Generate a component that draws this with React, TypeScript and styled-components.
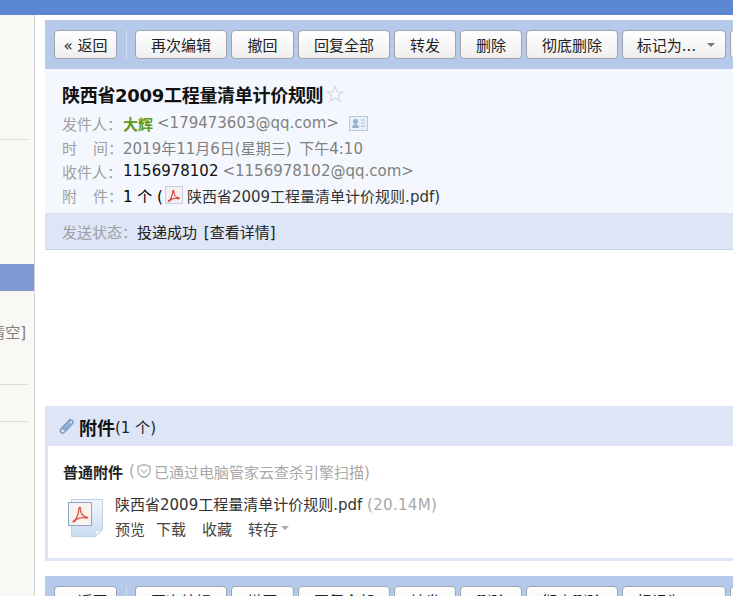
import React from 'react';
import styled, {createGlobalStyle} from 'styled-components';

const GlobalStyle = createGlobalStyle`
  html, body {
    margin: 0;
    padding: 0;
    background: #fff;
    overflow: hidden;
  }
  * {
    box-sizing: border-box;
  }
`;

const cjk = `"DejaVu Sans", "Noto Sans CJK SC", sans-serif`;

const Page = styled.div`
  width: 733px;
  height: 596px;
  overflow: hidden;
  display: flex;
  flex-direction: column;
  font-family: ${cjk};
  font-size: 15px;
  color: #000;
`;

const TopBar = styled.div`
  flex: none;
  height: 15px;
  background: #5b88d1;
`;

const Body = styled.div`
  flex: 1;
  min-height: 0;
  display: flex;
`;

const Sidebar = styled.aside`
  flex: none;
  width: 35px;
  background: #f9f8f5;
  border-right: 1px solid #d3d3d3;
  display: flex;
  flex-direction: column;
  overflow: hidden;
`;

const SideRule = styled.div<{$top: number}>`
  height: 1px;
  margin-top: ${p => p.$top}px;
  margin-right: 6px;
  background: #dddbd6;
`;

const SideActive = styled.div`
  height: 27px;
  margin-top: 124px;
  background: #7f9ad2;
`;

const SideText = styled.div`
  height: 20px;
  margin-top: 32px;
  padding-right: 8px;
  display: flex;
  justify-content: flex-end;
  white-space: nowrap;
  line-height: 20px;
  color: #808080;
`;

const Main = styled.main`
  flex: 1;
  min-width: 0;
  padding: 5px 0 0 10px;
  display: flex;
  flex-direction: column;
  overflow: hidden;
`;

const Toolbar = styled.div`
  flex: none;
  height: 49px;
  padding: 10px 0 0 9px;
  background: #b5c9ea;
  display: flex;
  align-items: flex-start;
  gap: 4px;
`;

const Button = styled.div<{$w: number}>`
  flex: none;
  width: ${p => p.$w}px;
  height: 29px;
  border: 1px solid #a0a6b0;
  border-radius: 4px;
  background: linear-gradient(#ffffff, #efefef);
  display: flex;
  align-items: center;
  justify-content: center;
  gap: 11px;
  color: #222;
  white-space: nowrap;
`;

const MenuButton = styled(Button)`
  padding-left: 4px;
`;

const ToolDivider = styled.div`
  flex: none;
  width: 1px;
  height: 29px;
  margin: 0 4px 0 5px;
  background: #cfdcf1;
`;

const Caret = styled.span<{$c?: string}>`
  display: inline-block;
  border-style: solid;
  border-width: 4px 4px 0;
  border-color: ${p => p.$c ?? '#777'} transparent transparent;
`;

const Header = styled.div`
  flex: none;
  height: 144px;
  padding: 13px 0 0 17px;
  background: #f4f8fe;
`;

const Title = styled.h1`
  margin: 0 0 5px;
  display: flex;
  align-items: center;
  gap: 3px;
  height: 24px;
  font-size: 18px;
  font-weight: bold;
  letter-spacing: -0.3px;
  color: #111;
`;

const MetaRow = styled.div`
  display: flex;
  align-items: center;
  height: 24px;
  white-space: nowrap;
`;

const MetaLabel = styled.span`
  flex: none;
  width: 61px;
  display: flex;
  justify-content: space-between;
  color: #a0a0a0;
`;

const Grey = styled.span`
  color: #808080;
`;

const DateText = styled(Grey)`
  word-spacing: 3px;
`;

const Sender = styled.b`
  margin-right: 4px;
  color: #5f9a1c;
`;

const CardIcon = styled.svg`
  margin-left: 10px;
`;

const Plain = styled.span`
  margin-right: 4px;
  color: #111;
`;

const FileName = styled.span`
  margin-left: 4px;
  color: #333;
`;

const Status = styled.div`
  flex: none;
  height: 37px;
  padding: 0 0 0 17px;
  background: #dde5f6;
  border-bottom: 1px solid #c3d2e8;
  display: flex;
  align-items: center;
  white-space: nowrap;
  word-spacing: 2px;
  color: #222;
`;

const StatusLabel = styled.span`
  color: #a0a0a0;
`;

const Content = styled.div`
  flex: none;
  height: 156px;
`;

const AttachHead = styled.div`
  flex: none;
  height: 40px;
  padding: 1px 0 0 13px;
  background: #dde5f6;
  display: flex;
  align-items: center;
  gap: 4px;
  white-space: nowrap;
`;

const AttachTitle = styled.b`
  font-size: 18px;
  color: #111;
`;

const AttachCount = styled.span`
  margin-left: -4px;
  color: #222;
`;

const AttachBody = styled.div`
  flex: none;
  height: 115px;
  padding: 14px 0 0 15px;
  border-left: 3px solid #dde5f6;
  border-bottom: 3px solid #dde5f6;
`;

const AttachKind = styled.div`
  display: flex;
  align-items: center;
  height: 22px;
  white-space: nowrap;
  color: #a8a8a8;
`;

const KindName = styled.b`
  margin-right: 6px;
  color: #222;
`;

const ShieldSvg = styled.svg`
  margin: 0 2px 0 1px;
`;

const FileRow = styled.div`
  display: flex;
  gap: 10px;
  margin-top: 11px;
  margin-left: 2px;
`;

const FileInfo = styled.div`
  display: flex;
  flex-direction: column;
  white-space: nowrap;
`;

const FileLine = styled.div`
  height: 24px;
  line-height: 24px;
  color: #333;
`;

const Actions = styled.div`
  display: flex;
  align-items: center;
  height: 22px;
  color: #444;
`;

const Action = styled.span<{$gap: number}>`
  margin-right: ${p => p.$gap}px;
`;

const Size = styled.span`
  letter-spacing: 0.3px;
  color: #a8a8a8;
`;

const BottomToolbar = styled(Toolbar)`
  margin-top: 15px;
`;

const BigPdfIcon = styled.svg`
  flex: none;
  margin-top: 3px;
`;

const SmallPdf = styled.span`
  flex: none;
  width: 18px;
  height: 18px;
  margin-left: 2px;
  display: inline-flex;
  align-items: center;
  justify-content: center;
  border: 1px solid #c5cfe0;
  background: #f1eff3;
`;

const acrobat =
  'M3 13.500C5 12.500 7 8 7.200 3.500 7.300 2 8.500 2.500 8.400 4 8.200 7 10 10 13.500 10.500 14.500 10.700 14 11.500 13 11.300 9.500 10.500 6 11 3.500 14 2.700 14.800 2 14 3 13.500Z';

const StarIcon = () => (
  <svg width="18" height="18" viewBox="0 0 20 20">
    <path
      d="M10 1.800 12.300 7.500 18.400 7.900 13.700 11.800 15.200 17.800 10 14.500 4.800 17.800 6.300 11.800 1.600 7.900 7.700 7.500Z"
      fill="#f8fafd"
      stroke="#d3dbe6"
      strokeWidth="1.500"
    />
  </svg>
);

const ShieldIcon = () => (
  <ShieldSvg width="16" height="16" viewBox="0 0 16 16" fill="none">
    <path d="M8 1.500 14 3.500V8C14 11 11 13.500 8 14.500 5 13.500 2 11 2 8V3.500Z" stroke="#b5b5b5" strokeWidth="1.400" />
    <path d="M5 6.500 8 10 11 6.500" stroke="#c5c5c5" strokeWidth="1.400" />
  </ShieldSvg>
);

const ClipIcon = () => (
  <svg width="17" height="19" viewBox="0 0 17 19" fill="none">
    <path
      d="M12 2.500 3 12C1 14.500 4 17.500 6.500 15L14.500 6.500C16 4.500 13.500 2 11.500 3.800L5.500 10.500C4.500 12 6 13 7 12L12 6.500"
      stroke="#7f9fc6"
      strokeWidth="1.700"
      strokeLinecap="round"
    />
  </svg>
);

const FilePdf = () => (
  <BigPdfIcon width="40" height="44" viewBox="0 0 40 44">
    <defs>
      <linearGradient id="pageFill" x1="0" y1="0" x2="0" y2="1">
        <stop offset="0" stopColor="#f3f6fb" />
        <stop offset="1" stopColor="#cadcf2" />
      </linearGradient>
    </defs>
    <path d="M6.500 3.500H37.500V33L30 40.500H6.500Z" fill="url(#pageFill)" stroke="#bcd0e8" />
    <path d="M30 40.500V34H37.500Z" fill="#eef4fb" stroke="#bcd0e8" />
    <rect x="3.500" y="6.500" width="23" height="23" fill="#f8f3f1" stroke="#8ea5c4" />
    <path d={acrobat} transform="translate(5 8) scale(1.250)" fill="none" stroke="#dd5a4c" strokeWidth="1.100" />
  </BigPdfIcon>
);

function Tools() {
  return (
    <>
      <Button $w={63}>« 返回</Button>
      <ToolDivider />
      <Button $w={92}>再次编辑</Button>
      <Button $w={63}>撤回</Button>
      <Button $w={92}>回复全部</Button>
      <Button $w={62}>转发</Button>
      <Button $w={62}>删除</Button>
      <Button $w={92}>彻底删除</Button>
      <MenuButton $w={104}>
        标记为...
        <Caret />
      </MenuButton>
      <Button $w={92} />
    </>
  );
}

function App() {
  return (
    <Page>
      <GlobalStyle />
      <TopBar />
      <Body>
        <Sidebar>
          <SideRule $top={124} />
          <SideActive />
          <SideText>[清空]</SideText>
          <SideRule $top={41} />
          <SideRule $top={36} />
        </Sidebar>
        <Main>
          <Toolbar>
            <Tools />
          </Toolbar>
          <Header>
            <Title>
              陕西省2009工程量清单计价规则
              <StarIcon />
            </Title>
            <MetaRow>
              <MetaLabel>发件人：</MetaLabel>
              <Sender>大辉</Sender>
              <Grey>&lt;179473603@qq.com&gt;</Grey>
              <CardIcon width="19" height="15" viewBox="0 0 19 15">
                <rect x="0.500" y="0.500" width="18" height="14" fill="#eaf0f8" stroke="#b5c9e0" />
                <circle cx="6.500" cy="5.500" r="2.500" fill="#9ab0cc" />
                <path d="M3 12c0-5 7-5 7 0z" fill="#9ab0cc" />
                <path d="M12 4h4M12 7h4M12 10h4" stroke="#a9bdd6" />
              </CardIcon>
            </MetaRow>
            <MetaRow>
              <MetaLabel>
                <span>时</span>
                <span>间：</span>
              </MetaLabel>
              <DateText>2019年11月6日(星期三) 下午4:10</DateText>
            </MetaRow>
            <MetaRow>
              <MetaLabel>收件人：</MetaLabel>
              <Plain>1156978102</Plain>
              <Grey>&lt;1156978102@qq.com&gt;</Grey>
            </MetaRow>
            <MetaRow>
              <MetaLabel>
                <span>附</span>
                <span>件：</span>
              </MetaLabel>
              1 个 (
              <SmallPdf>
                <svg width="15" height="15" viewBox="0 0 16 16" fill="none">
                  <path d={acrobat} stroke="#d8402f" strokeWidth="1.200" />
                </svg>
              </SmallPdf>
              <FileName>陕西省2009工程量清单计价规则.pdf)</FileName>
            </MetaRow>
          </Header>
          <Status>
            <StatusLabel>发送状态：</StatusLabel>
            投递成功 [查看详情]
          </Status>
          <Content />
          <AttachHead>
            <ClipIcon />
            <AttachTitle>附件</AttachTitle>
            <AttachCount>(1 个)</AttachCount>
          </AttachHead>
          <AttachBody>
            <AttachKind>
              <KindName>普通附件</KindName>(
              <ShieldIcon />
              已通过电脑管家云查杀引擎扫描)
            </AttachKind>
            <FileRow>
              <FilePdf />
              <FileInfo>
                <FileLine>
                  陕西省2009工程量清单计价规则.pdf <Size>(20.14M)</Size>
                </FileLine>
                <Actions>
                  <Action $gap={11}>预览</Action>
                  <Action $gap={16}>下载</Action>
                  <Action $gap={16}>收藏</Action>
                  <Action $gap={3}>转存</Action>
                  <Caret $c="#aaa" />
                </Actions>
              </FileInfo>
            </FileRow>
          </AttachBody>
          <BottomToolbar>
            <Tools />
          </BottomToolbar>
        </Main>
      </Body>
    </Page>
  );
}

export default App;
